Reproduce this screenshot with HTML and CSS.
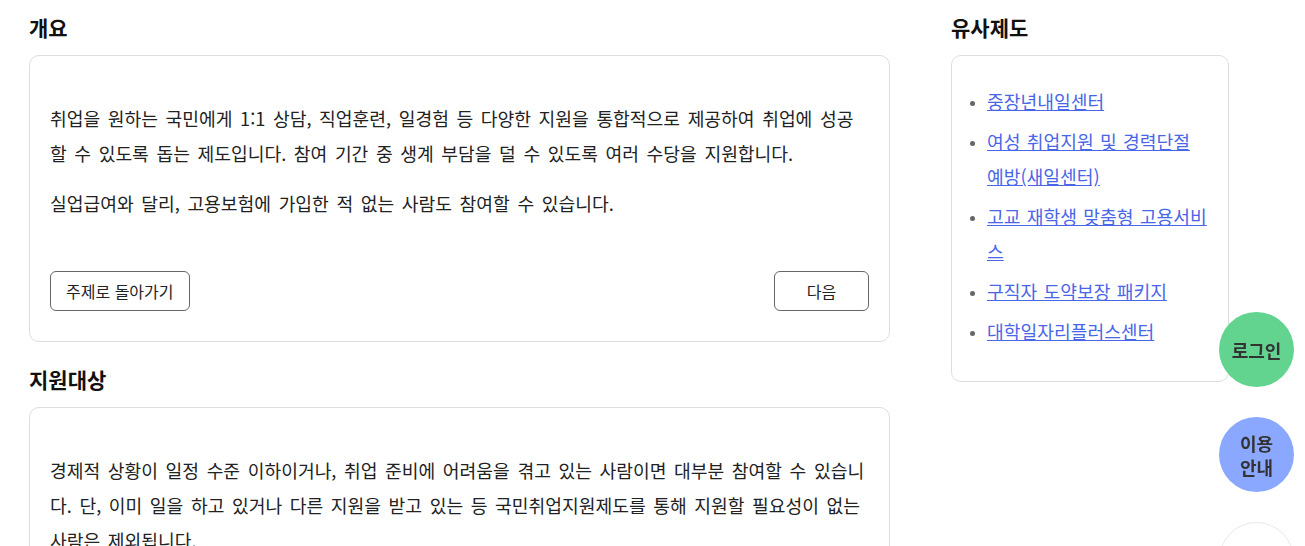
FILE: index.html
```html
<!DOCTYPE html>
<html lang="ko">

<head>
    <meta charset="UTF-8">
    <meta name="viewport" content="width=device-width, initial-scale=1.0">
    <title>국민취업지원제도</title>
    <link rel="stylesheet" href="styles.css">
</head>

<body>

    <div class="page">
        <div class="main-col">
            <section class="section">
                <h2>개요</h2>
                <div class="card">
                    <p>취업을 원하는 국민에게 1:1 상담, 직업훈련, 일경험 등 다양한 지원을 통합적으로 제공하여 취업에 성공할 수 있도록 돕는 제도입니다. 참여 기간 중 생계 부담을 덜 수 있도록 여러 수당을 지원합니다.</p>
                    <p>실업급여와 달리, 고용보험에 가입한 적 없는 사람도 참여할 수 있습니다.</p>
                    <div class="card-actions">
                        <button class="btn">주제로 돌아가기</button>
                        <button class="btn btn-next">다음</button>
                    </div>
                </div>
            </section>

            <section class="section">
                <h2>지원대상</h2>
                <div class="card">
                    <p>경제적 상황이 일정 수준 이하이거나, 취업 준비에 어려움을 겪고 있는 사람이면 대부분 참여할 수 있습니다. 단, 이미 일을 하고 있거나 다른 지원을 받고 있는 등 국민취업지원제도를 통해 지원할 필요성이 없는 사람은 제외됩니다.</p>
                    <p>자세한 조건은 고용센터에서 확인할 수 있습니다.</p>
                </div>
            </section>
        </div>

        <aside class="side-col">
            <h2>유사제도</h2>
            <div class="card side-card">
                <ul class="related-list">
                    <li><a href="#">중장년내일센터</a></li>
                    <li><a href="#">여성 취업지원 및 경력단절 예방(새일센터)</a></li>
                    <li><a href="#">고교 재학생 맞춤형 고용서비스</a></li>
                    <li><a href="#">구직자 도약보장 패키지</a></li>
                    <li><a href="#">대학일자리플러스센터</a></li>
                </ul>
            </div>
        </aside>
    </div>

    <div class="float-menu">
        <button class="float-btn float-login">로그인</button>
        <button class="float-btn float-guide">이용<br>안내</button>
        <button class="float-btn float-top" aria-label="맨 위로">
            <svg width="20" height="20" viewBox="0 0 20 20" fill="none" stroke="#555" stroke-width="2" stroke-linecap="round" stroke-linejoin="round">
                <path d="M10 16V4M4 10l6-6 6 6" />
            </svg>
        </button>
    </div>

</body>

</html>
```

FILE: styles.css
```css
body {
    font-family: "Noto Sans CJK KR", "Noto Sans", sans-serif;
    color: #222;
    background-color: #ffffff;
    margin: 0;
}

.page {
    display: flex;
    gap: 61px;
    padding: 13px 0 0 29px;
}

.main-col {
    width: 861px;
}

.side-col {
    width: 278px;
}

h2 {
    font-size: 21px;
    line-height: 28px;
    font-weight: bold;
    color: #111;
    margin: 0 0 14px;
}

.section {
    margin-bottom: 23px;
}

.card {
    border: 1px solid #dedede;
    border-radius: 10px;
    padding: 30px 20px;
    background-color: #ffffff;
}

.card p {
    font-size: 18.2px;
    line-height: 35px;
    word-spacing: 2.5px;
    margin: 15px 0;
}

.card-actions {
    display: flex;
    justify-content: space-between;
    margin-top: 50px;
}

.btn {
    font-family: inherit;
    font-size: 16px;
    color: #222;
    background-color: #ffffff;
    border: 1px solid #666;
    border-radius: 6px;
    height: 40px;
    padding: 0 15px;
    cursor: pointer;
}

.btn-next {
    width: 95px;
}

/* Related programs */
.side-card {
    padding: 28px 20px 32px;
}

.related-list {
    margin: 0;
    padding-left: 15px;
    color: #666;
}

.related-list li {
    font-size: 18.2px;
    line-height: 35px;
    word-spacing: 1.2px;
    margin-bottom: 5px;
}

.related-list li::marker {
    font-size: 13px;
}

.related-list li:last-child {
    margin-bottom: 0;
}

.related-list a {
    color: #4a66e8;
    text-decoration: underline;
}

/* Floating buttons */
.float-menu {
    position: fixed;
    right: 11px;
    top: 312px;
    display: flex;
    flex-direction: column;
    gap: 30px;
}

.float-btn {
    width: 75px;
    height: 75px;
    border-radius: 50%;
    border: none;
    font-family: inherit;
    font-size: 18px;
    font-weight: bold;
    line-height: 24px;
    color: #333;
    cursor: pointer;
    padding: 0;
}

.float-login {
    background-color: #62d490;
}

.float-guide {
    background-color: #8aa8ff;
}

.float-top {
    background-color: #ffffff;
    border: 1px solid #e8e8e8;
    display: flex;
    align-items: center;
    justify-content: center;
}
```
